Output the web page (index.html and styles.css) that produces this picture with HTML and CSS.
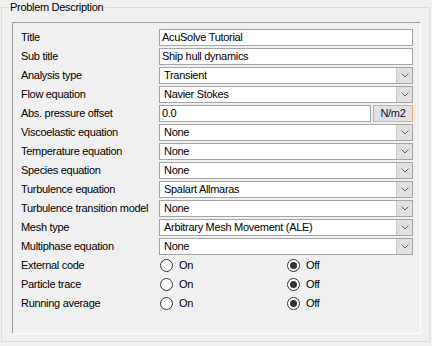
FILE: index.html
```html
<!DOCTYPE html>
<html lang="en">
<head>
    <meta charset="UTF-8">
    <title>Problem Description</title>
    <link rel="stylesheet" href="styles.css">
</head>
<body>

<fieldset class="group">
    <legend>Problem Description</legend>
    <div class="panel">
        <div class="form-grid">
            <label>Title</label>
            <div class="textbox">AcuSolve Tutorial</div>

            <label>Sub title</label>
            <div class="textbox">Ship hull dynamics</div>

            <label>Analysis type</label>
            <div class="combo"><span>Transient</span><i class="drop"><svg width="8" height="5" viewBox="0 0 8 5"><path d="M0.5 0.5 L4 4 L7.5 0.5" fill="none" stroke="#666" stroke-width="1"/></svg></i></div>

            <label>Flow equation</label>
            <div class="combo"><span>Navier Stokes</span><i class="drop"><svg width="8" height="5" viewBox="0 0 8 5"><path d="M0.5 0.5 L4 4 L7.5 0.5" fill="none" stroke="#666" stroke-width="1"/></svg></i></div>

            <label>Abs. pressure offset</label>
            <div class="unit-field">
                <div class="textbox">0.0</div>
                <button class="unit-btn">N/m2</button>
            </div>

            <label>Viscoelastic equation</label>
            <div class="combo"><span>None</span><i class="drop"><svg width="8" height="5" viewBox="0 0 8 5"><path d="M0.5 0.5 L4 4 L7.5 0.5" fill="none" stroke="#666" stroke-width="1"/></svg></i></div>

            <label>Temperature equation</label>
            <div class="combo"><span>None</span><i class="drop"><svg width="8" height="5" viewBox="0 0 8 5"><path d="M0.5 0.5 L4 4 L7.5 0.5" fill="none" stroke="#666" stroke-width="1"/></svg></i></div>

            <label>Species equation</label>
            <div class="combo"><span>None</span><i class="drop"><svg width="8" height="5" viewBox="0 0 8 5"><path d="M0.5 0.5 L4 4 L7.5 0.5" fill="none" stroke="#666" stroke-width="1"/></svg></i></div>

            <label>Turbulence equation</label>
            <div class="combo"><span>Spalart Allmaras</span><i class="drop"><svg width="8" height="5" viewBox="0 0 8 5"><path d="M0.5 0.5 L4 4 L7.5 0.5" fill="none" stroke="#666" stroke-width="1"/></svg></i></div>

            <label>Turbulence transition model</label>
            <div class="combo"><span>None</span><i class="drop"><svg width="8" height="5" viewBox="0 0 8 5"><path d="M0.5 0.5 L4 4 L7.5 0.5" fill="none" stroke="#666" stroke-width="1"/></svg></i></div>

            <label>Mesh type</label>
            <div class="combo"><span>Arbitrary Mesh Movement (ALE)</span><i class="drop"><svg width="8" height="5" viewBox="0 0 8 5"><path d="M0.5 0.5 L4 4 L7.5 0.5" fill="none" stroke="#666" stroke-width="1"/></svg></i></div>

            <label>Multiphase equation</label>
            <div class="combo"><span>None</span><i class="drop"><svg width="8" height="5" viewBox="0 0 8 5"><path d="M0.5 0.5 L4 4 L7.5 0.5" fill="none" stroke="#666" stroke-width="1"/></svg></i></div>

            <label>External code</label>
            <div class="radio-group">
                <span class="radio"><i class="dot"></i>On</span>
                <span class="radio checked"><i class="dot"></i>Off</span>
            </div>

            <label>Particle trace</label>
            <div class="radio-group">
                <span class="radio"><i class="dot"></i>On</span>
                <span class="radio checked"><i class="dot"></i>Off</span>
            </div>

            <label>Running average</label>
            <div class="radio-group">
                <span class="radio"><i class="dot"></i>On</span>
                <span class="radio checked"><i class="dot"></i>Off</span>
            </div>
        </div>
    </div>
</fieldset>

</body>
</html>
```

FILE: styles.css
```css
* { margin: 0; padding: 0; box-sizing: border-box; }

body {
    font-family: "Liberation Sans", Arial, sans-serif;
    font-size: 11px;
    letter-spacing: -0.3px;
    color: #000;
    background-color: #f0f0f0;
    width: 432px;
    height: 346px;
    overflow: hidden;
}

/* Group box */
.group {
    margin: 1px 0 0 1px;
    width: 429px;
    height: 341px;
    border: 1px solid #dcdcdc;
    padding: 0 8px 8px 10px;
    min-width: 0;
}
.group legend {
    margin-left: -3px;
    padding: 0 2px 0 1px;
    line-height: 13px;
}

.panel {
    margin-top: 8px;
    height: 312px;
    border-top: 1px solid #a0a0a0;
    border-left: 1px solid #a0a0a0;
    border-right: 1px solid #fff;
    border-bottom: 1px solid #fff;
    padding: 6px 6px 0 8px;
}

.form-grid {
    display: grid;
    grid-template-columns: 138px 254px;
    grid-auto-rows: 17px;
    row-gap: 2px;
    align-items: center;
}
.form-grid label { line-height: 17px; white-space: nowrap; }

/* Campos */
.textbox {
    height: 17px;
    background: #fff;
    border: 1px solid #a5a5a5;
    padding-left: 2px;
    line-height: 15px;
    white-space: nowrap;
}

.combo {
    height: 17px;
    background: #fff;
    border: 1px solid #a5a5a5;
    display: flex;
    align-items: center;
}
.combo span { flex: 1; padding-left: 4px; line-height: 15px; white-space: nowrap; }
.combo .drop {
    width: 16px;
    height: 15px;
    background: #e1e1e1;
    border-left: 1px solid #c8c8c8;
    display: flex;
    align-items: center;
    justify-content: center;
}

.unit-field { display: flex; gap: 2px; }
.unit-field .textbox { width: 212px; }
.unit-btn {
    width: 40px;
    height: 17px;
    background: #e1e1e1;
    border: 1px solid #f4a860;
    font: inherit;
    letter-spacing: inherit;
    color: #101040;
    line-height: 15px;
}

/* Radios */
.radio-group {
    display: grid;
    grid-template-columns: 127px 1fr;
    padding-left: 1px;
}
.radio { display: flex; align-items: center; gap: 6px; line-height: 17px; }
.radio .dot {
    width: 13px;
    height: 13px;
    border: 1px solid #333;
    border-radius: 50%;
    background: #fff;
    display: flex;
    align-items: center;
    justify-content: center;
}
.radio.checked .dot::after {
    content: "";
    width: 7px;
    height: 7px;
    border-radius: 50%;
    background: #333;
}
```
